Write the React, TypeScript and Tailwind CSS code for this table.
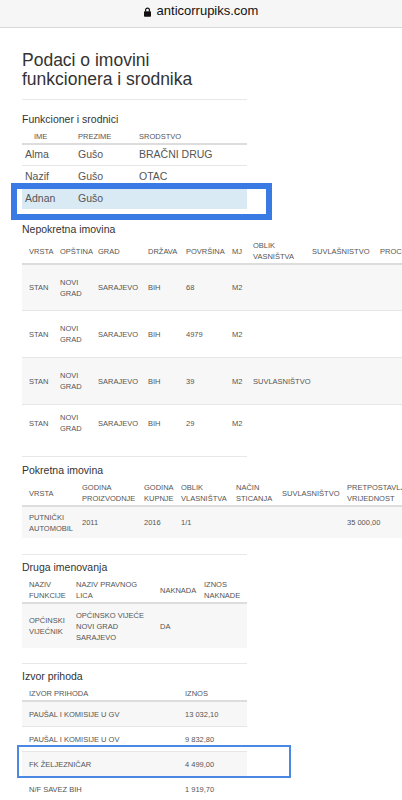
import React from "react";

const font = { fontFamily: '"Liberation Sans", Arial, sans-serif' };

type Row = { cells: React.ReactNode[]; striped?: boolean; h: string };

function DataTable({
  cols,
  headers,
  headH,
  rows,
}: {
  cols: string;
  headers: React.ReactNode[];
  headH: string;
  rows: Row[];
}) {
  return (
    <div className="w-max min-w-[225px]">
      <div className={`grid ${cols} ${headH} items-center border-b-2 border-[#dddddd] text-[7.5px] leading-[11px] text-[#555555]`}>
        {headers.map((h, i) => (
          <div key={i} className={`whitespace-nowrap ${i === 0 ? "pl-[7px]" : ""}`}>
            {h}
          </div>
        ))}
      </div>
      {rows.map((r, ri) => (
        <div
          key={ri}
          className={`grid ${cols} ${r.h} items-center text-[7.5px] leading-[11px] text-[#555555] ${ri > 0 ? "border-t border-[#e6e6e6]" : ""} ${r.striped ? "bg-[#f7f7f7]" : ""}`}
        >
          {r.cells.map((c, ci) => (
            <div key={ci} className={`whitespace-nowrap ${ci === 0 ? "pl-[7px]" : ""}`}>
              {c}
            </div>
          ))}
        </div>
      ))}
    </div>
  );
}

function Heading({ children, mt }: { children: React.ReactNode; mt: string }) {
  return <div className={`${mt} text-[10.5px] leading-[13px] text-[#333333]`}>{children}</div>;
}

export default function App() {
  const ngrad = (
    <>
      NOVI
      <br />
      GRAD
    </>
  );
  const stan = (h: string, povrsina: string, striped: boolean, oblik = "") => ({
    h,
    striped,
    cells: ["STAN", ngrad, "SARAJEVO", "BIH", povrsina, "M2", oblik, "", ""],
  });

  return (
    <div className="relative w-full min-h-screen overflow-hidden bg-white" style={font}>
      {/* address bar */}
      <div className="flex h-[28px] items-center justify-center gap-[6px] border-b border-[#d9d9d9] bg-[#f6f6f6] pb-[5px]">
        <svg width="7" height="10" viewBox="0 0 7 10" className="mt-[1px]">
          <path d="M1.6 4.5V3a1.9 1.9 0 0 1 3.8 0v1.5" fill="none" stroke="#111" strokeWidth="1.2" />
          <rect x="0" y="4.3" width="7" height="5.5" rx="0.8" fill="#111" />
        </svg>
        <span className="text-[13px] text-[#111111]">anticorrupiks.com</span>
      </div>

      <div className="ml-[22px] w-[225px]">
        <h1 className="mt-[23px] text-[17.5px] leading-[18.5px] text-[#333333]">
          Podaci o imovini
          <br />
          funkcionera i srodnika
        </h1>
        <div className="mt-[11px] h-px bg-[#e8e8e8]" />

        {/* Funkcioner i srodnici */}
        <Heading mt="mt-[13px]">Funkcioner i srodnici</Heading>
        <div className="mt-[5px] w-[225px]">
          <div className="grid h-[14px] grid-cols-[56px_61px_108px] items-center border-b-2 border-[#dddddd] text-[7.5px] text-[#555555]">
            <div className="pl-[12px]">IME</div>
            <div>PREZIME</div>
            <div>SRODSTVO</div>
          </div>
          {[
            ["Alma", "Gušo", "BRAČNI DRUG"],
            ["Nazif", "Gušo", "OTAC"],
            ["Adnan", "Gušo", ""],
          ].map((r, i) => (
            <div
              key={i}
              className={`grid grid-cols-[56px_61px_108px] items-center text-[10.5px] text-[#555555] ${i === 0 ? "h-[20px]" : "h-[22px] border-t border-[#e6e6e6]"} ${i === 2 ? "bg-[#d9eaf5]" : ""}`}
            >
              <div className="pl-[3px]">{r[0]}</div>
              <div>{r[1]}</div>
              <div>{r[2]}</div>
            </div>
          ))}
        </div>
        <div className="mt-[6px] h-px bg-[#e8e8e8]" />

        {/* Nepokretna imovina */}
        <Heading mt="mt-[7px]">Nepokretna imovina</Heading>
        <div className="mt-[3px]">
          <DataTable
            cols="grid-cols-[38px_38px_50px_38px_46px_21px_59px_68px_90px]"
            headH="h-[26px]"
            headers={[
              "VRSTA",
              "OPŠTINA",
              "GRAD",
              "DRŽAVA",
              "POVRŠINA",
              "MJ",
              <>
                OBLIK
                <br />
                VASNIŠTVA
              </>,
              "SUVLAŠNISTVO",
              "PROCENAT",
            ]}
            rows={[
              stan("h-[45px]", "68", true),
              stan("h-[47px]", "4979", false),
              stan("h-[47px]", "39", true, "SUVLASNIŠTVO"),
              stan("h-[37px]", "29", false),
            ]}
          />
        </div>
        <div className="mt-[15px] h-px bg-[#e8e8e8]" />

        {/* Pokretna imovina */}
        <Heading mt="mt-[7px]">Pokretna imovina</Heading>
        <div className="mt-[4px]">
          <DataTable
            cols="grid-cols-[60px_62px_37px_55px_46px_65px_100px]"
            headH="h-[26px]"
            headers={[
              "VRSTA",
              <>
                GODINA
                <br />
                PROIZVODNJE
              </>,
              <>
                GODINA
                <br />
                KUPNJE
              </>,
              <>
                OBLIK
                <br />
                VLASNIŠTVA
              </>,
              <>
                NAČIN
                <br />
                STICANJA
              </>,
              "SUVLASNIŠTVO",
              <>
                PRETPOSTAVLJENA
                <br />
                VRIJEDNOST
              </>,
            ]}
            rows={[
              {
                h: "h-[31px]",
                striped: true,
                cells: [
                  <>
                    PUTNIČKI
                    <br />
                    AUTOMOBIL
                  </>,
                  "2011",
                  "2016",
                  "1/1",
                  "",
                  "",
                  "35 000,00",
                ],
              },
            ]}
          />
        </div>
        <div className="mt-[16px] h-px bg-[#e8e8e8]" />

        {/* Druga imenovanja */}
        <Heading mt="mt-[6px]">Druga imenovanja</Heading>
        <div className="mt-[4px]">
          <DataTable
            cols="grid-cols-[54px_84px_44px_43px]"
            headH="h-[26px]"
            headers={[
              <>
                NAZIV
                <br />
                FUNKCIJE
              </>,
              <>
                NAZIV PRAVNOG
                <br />
                LICA
              </>,
              "NAKNADA",
              <>
                IZNOS
                <br />
                NAKNADE
              </>,
            ]}
            rows={[
              {
                h: "h-[44px]",
                striped: true,
                cells: [
                  <>
                    OPĆINSKI
                    <br />
                    VIJEĆNIK
                  </>,
                  <>
                    OPĆINSKO VIJEĆE
                    <br />
                    NOVI GRAD
                    <br />
                    SARAJEVO
                  </>,
                  "DA",
                  "",
                ],
              },
            ]}
          />
        </div>
        <div className="mt-[15px] h-px bg-[#e8e8e8]" />

        {/* Izvor prihoda */}
        <Heading mt="mt-[6px]">Izvor prihoda</Heading>
        <div className="mt-[4px]">
          <DataTable
            cols="grid-cols-[163px_62px]"
            headH="h-[15px]"
            headers={["IZVOR PRIHODA", "IZNOS"]}
            rows={[
              { h: "h-[24px]", striped: true, cells: ["PAUŠAL I KOMISIJE U GV", "13 032,10"] },
              { h: "h-[25px]", striped: false, cells: ["PAUŠAL I KOMISIJE U OV", "9 832,80"] },
              { h: "h-[25px]", striped: true, cells: ["FK ŽELJEZNIČAR", "4 499,00"] },
              { h: "h-[25px]", striped: false, cells: ["N/F SAVEZ BIH", "1 919,70"] },
            ]}
          />
        </div>
      </div>

      {/* annotation boxes */}
      <div className="absolute left-[11px] top-[183px] h-[37px] w-[261px] border-[6px] border-[#3a7ae4]" />
      <div className="absolute left-[17px] top-[745px] h-[33px] w-[274px] border-2 border-[#4a88e3]" />
    </div>
  );
}
